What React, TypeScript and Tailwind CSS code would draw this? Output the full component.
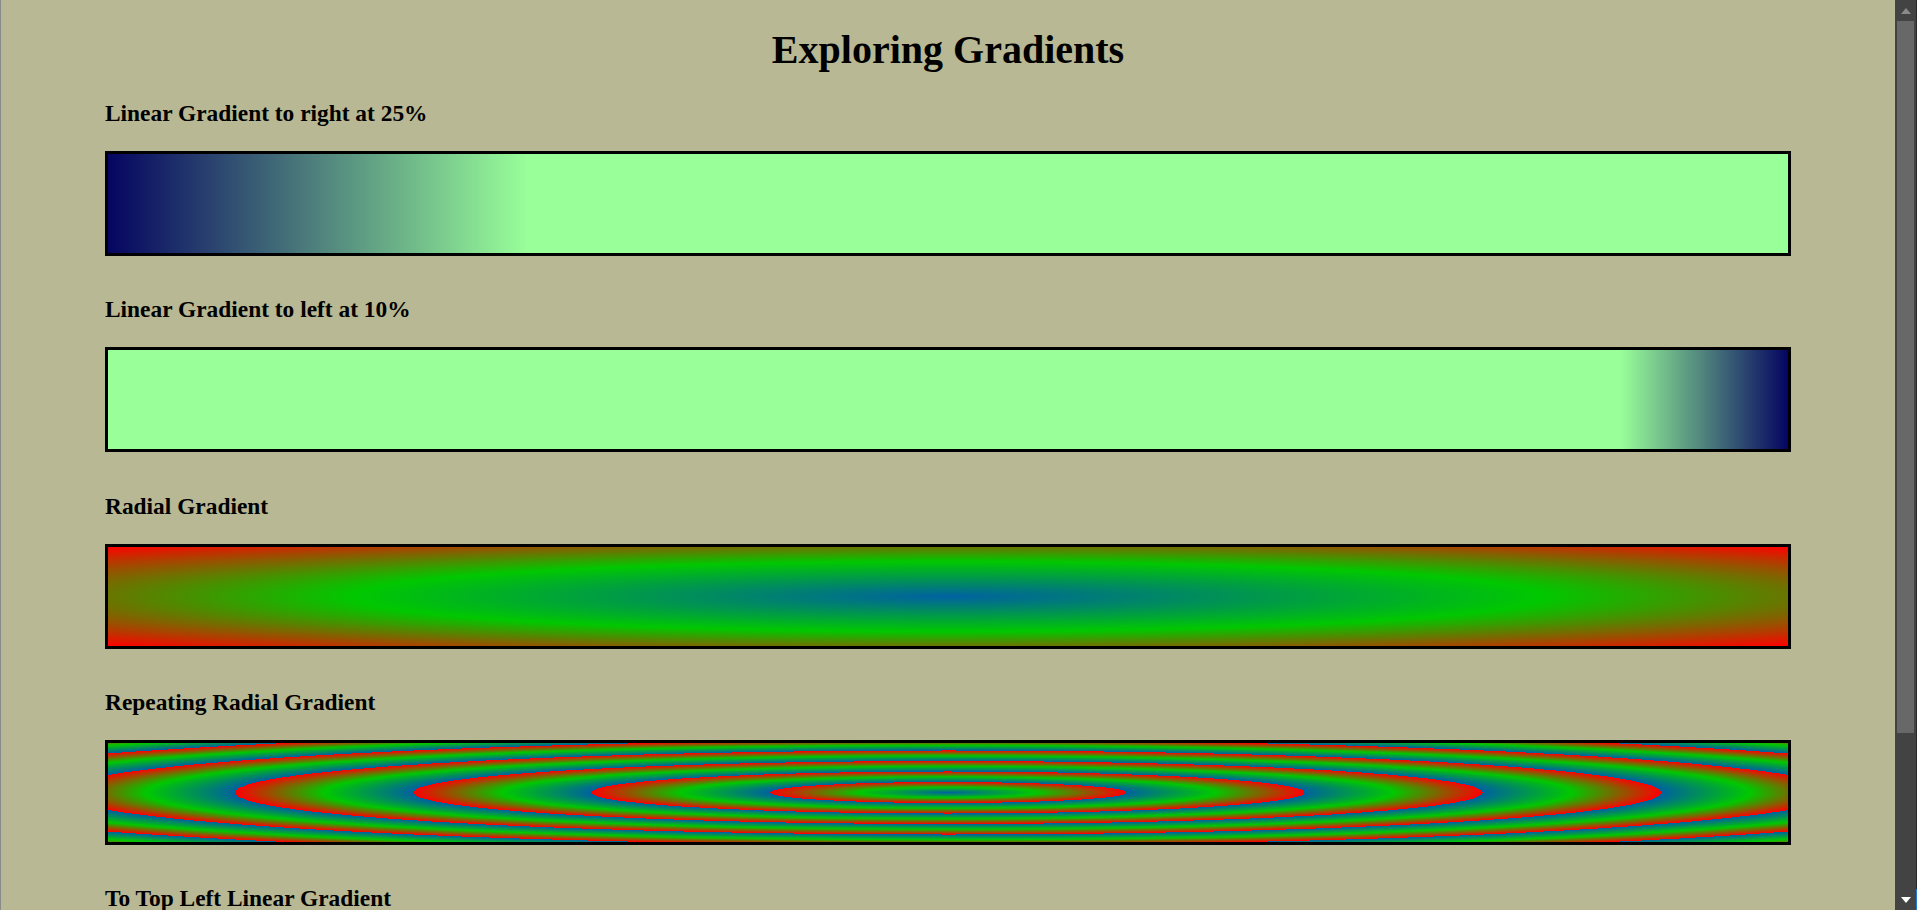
const sections = [
  {
    label: "Linear Gradient to right at 25%",
    bg: "bg-[linear-gradient(to_right,#050561,#99ff99_25%)]",
  },
  {
    label: "Linear Gradient to left at 10%",
    bg: "bg-[linear-gradient(to_left,#050561,#99ff99_10%)]",
  },
  {
    label: "Radial Gradient",
    bg: "bg-[radial-gradient(#0062a0,#00c800,#ff0000)]",
  },
  {
    label: "Repeating Radial Gradient",
    bg: "bg-[repeating-radial-gradient(#0062a0,#00c800_7.5%,#ff0000_15%)]",
  },
  {
    label: "To Top Left Linear Gradient",
    bg: "bg-[linear-gradient(to_top_left,#050561,#99ff99)]",
  },
]

function Scrollbar() {
  return (
    <div className="flex w-[22px] shrink-0">
      <div className="flex w-[21px] flex-col bg-[#434343]">
        <div className="flex h-[21px] items-center justify-center">
          <svg width="10" height="6" viewBox="0 0 10 6">
            <path d="M0 6 L5 0 L10 6 Z" fill="#8a8a8a" />
          </svg>
        </div>
        <div className="ml-[2px] h-[712px] w-[17px] bg-[#686868]" />
        <div className="flex-1" />
        <div className="flex h-[21px] items-center justify-center">
          <svg width="10" height="6" viewBox="0 0 10 6">
            <path d="M0 0 L10 0 L5 6 Z" fill="#ffffff" />
          </svg>
        </div>
      </div>
      <div className="flex w-px flex-col bg-[#2a2a2a]">
        <div className="flex-1" />
        <div className="h-[21px] bg-[#1f7ad4]" />
      </div>
    </div>
  )
}

export default function App() {
  return (
    <div className="flex h-[910px] overflow-hidden bg-[#b8b894] font-['Liberation_Serif',serif] text-black">
      <div className="w-px shrink-0 bg-[#8a8a8a]" />
      <main className="flex-1 px-[104px] pt-[27.8px]">
        <h1 className="text-center text-[40px] font-bold leading-[44px]">
          Exploring Gradients
        </h1>
        <div className="mt-[28.2px] flex flex-col gap-[40.3px]">
          {sections.map((s) => (
            <section key={s.label}>
              <h3 className="text-[23.4px] font-bold leading-[27px]">{s.label}</h3>
              <div className={`mt-[24px] h-[105px] border-[3px] border-black ${s.bg}`} />
            </section>
          ))}
        </div>
      </main>
      <Scrollbar />
    </div>
  )
}
